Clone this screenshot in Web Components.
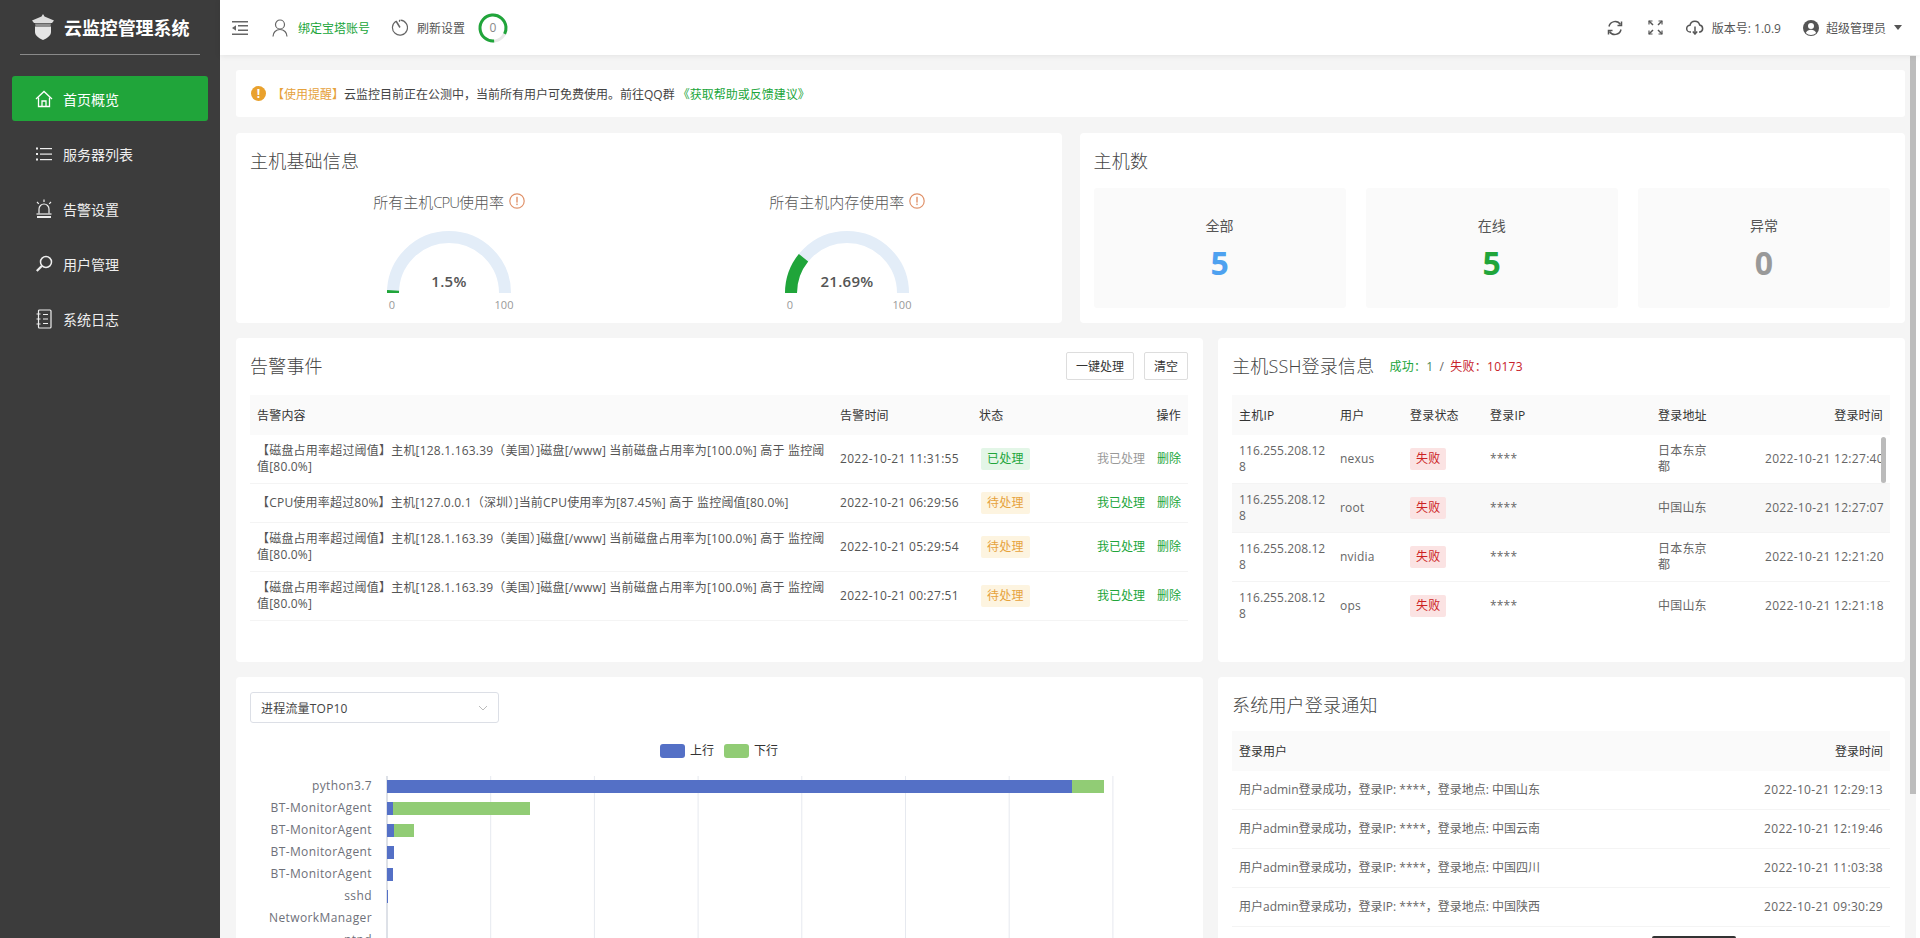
<!DOCTYPE html>
<html lang="zh-CN">
<head>
<meta charset="utf-8">
<title>云监控管理系统</title>
<style>
  html, body { margin: 0; height: 100%; overflow: hidden; }
  body { font-family: "Open Sans", "Noto Sans CJK SC", sans-serif; font-size: 12px; color: #666; }
</style>
</head>
<body>
<app-shell></app-shell>

<script>
const ICONS = {
  logo: `<svg width="24" height="26" viewBox="0 0 24 26"><path d="M12 0l1.500 2.500L23 6.500l-2 2.500H3L1 6.500l9.500-4z" fill="#ddd"/><path d="M4 9.500h16l-.5 2.500h-15z" fill="#8f8f8f"/><path d="M4 12.500h16v5.500c0 3.500-3.500 6-8 8-4.500-2-8-4.500-8-8z" fill="#e6e6e6"/></svg>`,
  home: `<svg width="18" height="18" viewBox="0 0 18 18" fill="none" stroke="currentColor" stroke-width="1.300"><path d="M1 9l8-7.500L17 9"/><path d="M3.500 7.500v9h11v-9"/><path d="M7 16.500v-5.500h4v5.500"/></svg>`,
  list: `<svg width="18" height="16" viewBox="0 0 18 16" fill="currentColor"><rect x="1" y="1.500" width="2" height="2"/><rect x="1" y="7" width="2" height="2"/><rect x="1" y="12.500" width="2" height="2"/><rect x="5" y="2" width="12" height="1.200"/><rect x="5" y="7.500" width="12" height="1.200"/><rect x="5" y="13" width="12" height="1.200"/></svg>`,
  alarm: `<svg width="18" height="20" viewBox="0 0 18 20" fill="none" stroke="currentColor" stroke-width="1.200"><path d="M4 14.500V10a5 5 0 0 1 10 0v4.500"/><path d="M9 0.500v2.500M2 3l1.800 1.800M16 3l-1.800 1.800"/><path d="M1.500 15h15"/><path d="M2 18h14" stroke-width="2"/></svg>`,
  search: `<svg width="18" height="18" viewBox="0 0 18 18" fill="none" stroke="currentColor"><circle cx="11" cy="7" r="5.500" stroke-width="1.500"/><path d="M6.800 11L1.800 16" stroke-width="2.200"/></svg>`,
  log: `<svg width="16" height="20" viewBox="0 0 16 20" fill="none" stroke="currentColor" stroke-width="1.200"><rect x="2.500" y="1" width="12.500" height="18" rx="1"/><path d="M0.500 5h4M0.500 10h4M0.500 15h4M7 5.500h5M7 10h5M7 14.500h5"/></svg>`,
  collapse: `<svg width="16" height="14" viewBox="0 0 16 14" fill="#666"><rect y="0" width="16" height="1.500"/><rect x="6" y="4" width="10" height="1.500"/><rect x="6" y="8.500" width="10" height="1.500"/><rect y="12.500" width="16" height="1.500"/><path d="M0 7l4-2.800v5.600z"/></svg>`,
  user: `<svg width="16" height="18" viewBox="0 0 16 18" fill="none" stroke="#666" stroke-width="1.200"><circle cx="8" cy="5.500" r="4.500"/><path d="M1 17.500c0-4 3-7 7-7s7 3 7 7"/></svg>`,
  timer: `<svg width="17" height="17" viewBox="0 0 17 17" fill="none" stroke="#666" stroke-width="1.200"><path d="M5 2.200A7.500 7.500 0 1 0 9.500 1.100"/><path d="M5 2l4 6.500" stroke-width="1.500"/><path d="M8.500 0.800v2"/></svg>`,
  refresh: `<svg width="16" height="16" viewBox="0 0 16 16" fill="none" stroke="#555" stroke-width="1.500"><path d="M2 6.500A6.300 6.300 0 0 1 13.500 4.500"/><path d="M14 9.500A6.300 6.300 0 0 1 2.500 11.500"/><path d="M14.500 1.500v4h-4M1.500 14.500v-4h4"/></svg>`,
  expand: `<svg width="15" height="15" viewBox="0 0 15 15" fill="none" stroke="#555" stroke-width="1.500"><path d="M1 1l4 4M14 1l-4 4M1 14l4-4M14 14l-4-4"/><path d="M1 4.500V1h3.500M10.500 1H14v3.500M1 10.500V14h3.500M10.500 14H14v-3.500" stroke-width="1.200"/></svg>`,
  cloud: `<svg width="18" height="15" viewBox="0 0 18 15" fill="none" stroke="#555" stroke-width="1.500"><path d="M5 12H4.200A3.400 3.400 0 0 1 4 5.200 5 5 0 0 1 13.700 5a3.600 3.600 0 0 1 .3 7h-1"/><path d="M9 6.500v7"/><path d="M6.800 11.500L9 14l2.200-2.500"/></svg>`,
  avatar: `<svg width="16" height="16" viewBox="0 0 16 16"><circle cx="8" cy="8" r="8" fill="#555"/><circle cx="8" cy="6" r="3" fill="#fff"/><path d="M2.800 13c1-2.500 3-3.300 5.200-3.300s4.200.8 5.200 3.300a7.500 7.500 0 0 1-10.400 0z" fill="#fff"/></svg>`,
  warn: `<svg width="16" height="16" viewBox="0 0 16 16"><circle cx="8" cy="8" r="7.200" fill="none" stroke="#e0926a" stroke-width="1.200"/><rect x="7.300" y="3.800" width="1.400" height="5.800" fill="#e0926a"/><rect x="7.300" y="10.600" width="1.400" height="1.500" fill="#e0926a"/></svg>`,
};

class AppSidebar extends HTMLElement {
  constructor() {
    super();
    this.attachShadow({ mode: 'open' });
  }

  connectedCallback() {
    const items = [
      ['home', '首页概览', true],
      ['list', '服务器列表'],
      ['alarm', '告警设置'],
      ['search', '用户管理'],
      ['log', '系统日志'],
    ];
    this.shadowRoot.innerHTML = `
      <style>
        :host { display: block; width: 220px; flex: none; background: #3c3c3c; color: #eee; }
        .brand { height: 55px; margin: 0 20px; box-sizing: border-box; border-bottom: 1px solid #8a8a8a; display: flex; align-items: center; padding-left: 11px; gap: 9px; color: #fff; font-size: 18px; font-weight: 700; letter-spacing: -.1px; }
        .brand svg { margin-top: -1px; flex: none; }
        nav { padding: 21px 12px 0; display: flex; flex-direction: column; gap: 10px; }
        a { height: 45px; display: flex; align-items: center; border-radius: 3px; font-size: 14px; padding-left: 23px; }
        a.on { background: #20a53a; color: #fff; }
        .ic { width: 18px; height: 22px; margin-right: 10px; display: flex; align-items: center; justify-content: center; }
      </style>
      <div class="brand">${ICONS.logo}<span>云监控管理系统</span></div>
      <nav>
        ${items.map(([icon, label, on]) => `<a class="${on ? 'on' : ''}"><span class="ic">${ICONS[icon]}</span>${label}</a>`).join('')}
      </nav>
    `;
  }
}

class AppHeader extends HTMLElement {
  constructor() {
    super();
    this.attachShadow({ mode: 'open' });
  }

  connectedCallback() {
    this.shadowRoot.innerHTML = `
      <style>
        :host { display: flex; align-items: center; height: 55px; flex: none; background: #fff; box-shadow: 0 1px 6px rgba(0,0,0,.08); padding: 0 18px 0 12px; font-size: 12px; color: #555; position: relative; z-index: 2; box-sizing: border-box; }
        .item { display: flex; align-items: center; gap: 9px; white-space: nowrap; }
        .green { color: #20a53a; }
        .ring { width: 30px; height: 30px; margin-left: 13px; position: relative; display: flex; align-items: center; justify-content: center; color: #888; }
        .ring svg { position: absolute; inset: 0; }
        .push { margin-left: auto; }
        .caret { width: 0; height: 0; border: 4px solid transparent; border-top: 5px solid #555; border-bottom: 0; }
      </style>
      <span class="item">${ICONS.collapse}</span>
      <span class="item green" style="margin-left:24px;gap:10px">${ICONS.user}绑定宝塔账号</span>
      <span class="item" style="margin-left:21px">${ICONS.timer}刷新设置</span>
      <span class="ring">
        <svg width="30" height="30" viewBox="0 0 30 30" fill="none">
          <circle cx="15" cy="15" r="13" stroke="#e8e8e8" stroke-width="3"/>
          <circle cx="15" cy="15" r="13" stroke="#20a53a" stroke-width="3" stroke-dasharray="68 14" transform="rotate(85 15 15)"/>
        </svg>
        0
      </span>
      <span class="item push">${ICONS.refresh}</span>
      <span class="item" style="margin-left:25px">${ICONS.expand}</span>
      <span class="item" style="margin-left:23px;gap:8px">${ICONS.cloud}版本号: 1.0.9</span>
      <span class="item" style="margin-left:22px;gap:7px">${ICONS.avatar}超级管理员<i class="caret" style="margin-left:1px"></i></span>
    `;
  }
}

class NoticeBar extends HTMLElement {
  constructor() {
    super();
    this.attachShadow({ mode: 'open' });
  }

  connectedCallback() {
    this.shadowRoot.innerHTML = `
      <style>
        :host { display: flex; align-items: center; height: 47px; background: #fff; border-radius: 3px; padding-left: 15px; color: #444; font-size: 12px; }
        .dot { width: 15px; height: 15px; border-radius: 50%; background: #e9a12d; color: #fff; margin-right: 6px; font-weight: 700; line-height: 15px; text-align: center; flex: none; }
        .tip { color: #e6a23c; }
        .link { color: #20a53a; margin-left: 3px; }
      </style>
      <span class="dot">!</span><span class="tip">【使用提醒】</span><span>云监控目前正在公测中，当前所有用户可免费使用。前往QQ群</span><span class="link">《获取帮助或反馈建议》</span>
    `;
  }
}

class UiCard extends HTMLElement {
  constructor() {
    super();
    this.attachShadow({ mode: 'open' });
  }

  connectedCallback() {
    this.shadowRoot.innerHTML = `
      <style>
        :host { display: block; background: #fff; border-radius: 4px; padding: 15px 15px 15px 14px; box-sizing: border-box; min-width: 0; overflow: hidden; position: relative; }
        .head { display: flex; align-items: center; height: 26px; }
        h3 { margin: 0; font-size: 18px; font-weight: 300; color: #444; line-height: 26px; letter-spacing: .2px; }
        .head ::slotted([slot=extra]) { margin-left: 15px; }
        .head ::slotted([slot=actions]) { margin-left: auto; }
        .head.none { display: none; }
      </style>
      <div class="head ${this.getAttribute('title') ? '' : 'none'}">
        <h3>${this.getAttribute('title') || ''}</h3>
        <slot name="extra"></slot>
        <slot name="actions"></slot>
      </div>
      <slot></slot>
    `;
    this.removeAttribute('title');
  }
}

class GaugeChart extends HTMLElement {
  constructor() {
    super();
    this.attachShadow({ mode: 'open' });
  }

  connectedCallback() {
    const value = parseFloat(this.getAttribute('value'));
    const r = 56, cx = 65, cy = 66;
    const a = Math.PI * (1 - value / 100);
    const ex = (cx + r * Math.cos(a)).toFixed(2), ey = (cy - r * Math.sin(a)).toFixed(2);
    this.shadowRoot.innerHTML = `
      <style>
        :host { display: flex; flex-direction: column; align-items: center; flex: 1; }
        .t { display: flex; align-items: center; gap: 5px; font-size: 15px; font-weight: 300; color: #555; height: 22px; margin-top: 16px; white-space: nowrap; }
        svg.g { margin-top: 15px; display: block; }
        text { font-family: "Open Sans", sans-serif; }
        ::slotted(span) { letter-spacing: -1px; }
      </style>
      <div class="t"><span><slot></slot></span>${ICONS.warn}</div>
      <svg class="g" width="130" height="84" viewBox="0 0 130 84">
        <path d="M${cx - r} ${cy}A${r} ${r} 0 0 1 ${cx + r} ${cy}" fill="none" stroke="#e3edf8" stroke-width="12"/>
        <path d="M${cx - r} ${cy}A${r} ${r} 0 0 1 ${ex} ${ey}" fill="none" stroke="#20a53a" stroke-width="12"/>
        <text x="${cx}" y="60" text-anchor="middle" font-size="15" font-weight="600" fill="#555" letter-spacing=".3">${value}%</text>
        <text x="8" y="82" text-anchor="middle" font-size="11" fill="#999">0</text>
        <text x="120" y="82" text-anchor="middle" font-size="11" fill="#999">100</text>
      </svg>
    `;
  }
}

class StatTile extends HTMLElement {
  constructor() {
    super();
    this.attachShadow({ mode: 'open' });
  }

  connectedCallback() {
    this.shadowRoot.innerHTML = `
      <style>
        :host { display: flex; flex-direction: column; align-items: center; flex: 1; height: 120px; background: #fafafa; border-radius: 3px; color: #555; font-size: 14px; box-sizing: border-box; padding-top: 27px; }
        b { font-size: 32px; line-height: 40px; margin-top: 8px; font-weight: 700; color: ${this.getAttribute('color')}; }
      </style>
      <span>${this.getAttribute('label')}</span>
      <b>${this.getAttribute('value')}</b>
    `;
  }
}

class StatusBadge extends HTMLElement {
  constructor() {
    super();
    this.attachShadow({ mode: 'open' });
  }

  connectedCallback() {
    const tones = {
      ok: ['#e3f6e7', '#20a53a'],
      wait: ['#fdf4e0', '#e6a23c'],
      fail: ['#fbe3e3', '#cc2222'],
    };
    const [bg, fg] = tones[this.getAttribute('tone')];
    this.shadowRoot.innerHTML = `
      <style>
        :host { display: inline-block; height: 22px; line-height: 22px; padding: 0 6px; border-radius: 2px; background: ${bg}; color: ${fg}; font-size: 12px; vertical-align: middle; }
      </style>
      <slot></slot>
    `;
  }
}

const TABLE_CSS = `
  table { width: 100%; border-collapse: separate; border-spacing: 0; table-layout: fixed; font-size: 12px; color: #666; letter-spacing: .2px; }
  th { height: 40px; box-sizing: border-box; background: #fafafa; color: #333; font-weight: 400; text-align: left; padding: 0 7px; }
  td { padding: 8px 7px; line-height: 16px; border-bottom: 1px solid #f4f4f4; word-break: break-all; }
  .r { text-align: right; }
  .time { letter-spacing: .3px; white-space: nowrap; }
`;

class AlarmTable extends HTMLElement {
  constructor() {
    super();
    this.attachShadow({ mode: 'open' });
  }

  connectedCallback() {
    const disk = '【磁盘占用率超过阈值】主机[128.1.163.39（美国）]磁盘[/www] 当前磁盘占用率为[100.0%] 高于 监控阈值[80.0%]';
    const rows = [
      [disk, '2022-10-21 11:31:55', 'ok', '已处理'],
      ['【CPU使用率超过80%】主机[127.0.0.1（深圳）]当前CPU使用率为[87.45%] 高于 监控阈值[80.0%]', '2022-10-21 06:29:56', 'wait', '待处理'],
      [disk, '2022-10-21 05:29:54', 'wait', '待处理'],
      [disk, '2022-10-21 00:27:51', 'wait', '待处理'],
    ];
    this.shadowRoot.innerHTML = `
      <style>
        :host { display: block; margin-top: 16px; }
        ${TABLE_CSS}
        td { color: #555; }
        .a { color: #20a53a; margin-left: 12px; letter-spacing: 0; }
        .done { color: #999; }
      </style>
      <table>
        <colgroup><col style="width:583px"><col style="width:139px"><col style="width:70px"><col></colgroup>
        <thead><tr><th>告警内容</th><th>告警时间</th><th>状态</th><th class="r">操作</th></tr></thead>
        <tbody>
          ${rows.map(([text, time, tone, state]) => `<tr>
            <td>${text}</td>
            <td class="time">${time}</td>
            <td><status-badge tone="${tone}" style="margin-left:2px">${state}</status-badge></td>
            <td class="r"><span class="a ${tone === 'ok' ? 'done' : ''}">我已处理</span><span class="a">删除</span></td>
          </tr>`).join('')}
        </tbody>
      </table>
    `;
  }
}

class SshTable extends HTMLElement {
  constructor() {
    super();
    this.attachShadow({ mode: 'open' });
  }

  connectedCallback() {
    const ip = '116.255.208.128';
    const rows = [
      ['nexus', '日本东京都', '2022-10-21 12:27:40'],
      ['root', '中国山东', '2022-10-21 12:27:07'],
      ['nvidia', '日本东京都', '2022-10-21 12:21:20'],
      ['ops', '中国山东', '2022-10-21 12:21:18'],
    ];
    this.shadowRoot.innerHTML = `
      <style>
        :host { display: block; margin-top: 16px; position: relative; }
        ${TABLE_CSS}
        tbody tr:nth-child(2) td { background: #f8f8f8; }
        tbody tr:last-child td { border-bottom: 0; }
        td.ip { padding-right: 4px; letter-spacing: .1px; }
        td.addr { padding-right: 50px; }
        .bar { position: absolute; right: 4px; top: 42px; width: 5px; height: 46px; background: #bbb; border-radius: 3px; }
      </style>
      <table>
        <colgroup><col style="width:101px"><col style="width:70px"><col style="width:80px"><col style="width:168px"><col style="width:107px"><col></colgroup>
        <thead><tr><th>主机IP</th><th>用户</th><th>登录状态</th><th>登录IP</th><th>登录地址</th><th class="r">登录时间</th></tr></thead>
        <tbody>
          ${rows.map(([user, addr, time]) => `<tr>
            <td class="ip">${ip}</td>
            <td>${user}</td>
            <td><status-badge tone="fail">失败</status-badge></td>
            <td>****</td>
            <td class="addr">${addr}</td>
            <td class="r time">${time}</td>
          </tr>`).join('')}
        </tbody>
      </table>
      <div class="bar"></div>
    `;
  }
}

class NotifyTable extends HTMLElement {
  constructor() {
    super();
    this.attachShadow({ mode: 'open' });
  }

  connectedCallback() {
    const rows = [
      ['中国山东', '2022-10-21 12:29:13'],
      ['中国云南', '2022-10-21 12:19:46'],
      ['中国四川', '2022-10-21 11:03:38'],
      ['中国陕西', '2022-10-21 09:30:29'],
    ];
    this.shadowRoot.innerHTML = `
      <style>
        :host { display: block; margin-top: 13px; }
        ${TABLE_CSS}
        td { padding: 11px 7px; }
        table { letter-spacing: 0; }
      </style>
      <table>
        <colgroup><col><col style="width:160px"></colgroup>
        <thead><tr><th>登录用户</th><th class="r">登录时间</th></tr></thead>
        <tbody>
          ${rows.map(([place, time]) => `<tr>
            <td>用户admin登录成功，登录IP: ****，登录地点: ${place}</td>
            <td class="r time">${time}</td>
          </tr>`).join('')}
        </tbody>
      </table>
    `;
  }
}

class TrafficChart extends HTMLElement {
  constructor() {
    super();
    this.attachShadow({ mode: 'open' });
  }

  connectedCallback() {
    // [name, up end x, down end x], measured from the axis line
    const x0 = 151, step = 103.7;
    const rows = [
      ['python3.7', 685, 717],
      ['BT-MonitorAgent', 6, 143],
      ['BT-MonitorAgent', 7, 27],
      ['BT-MonitorAgent', 7, 7],
      ['BT-MonitorAgent', 6, 6],
      ['sshd', 1, 1],
      ['NetworkManager', 0, 0],
      ['ntpd', 0, 0],
    ];
    const grid = Array.from({ length: 8 }, (_, i) => x0 + i * step);
    this.shadowRoot.innerHTML = `
      <style>
        :host { display: block; }
        .sel { width: 249px; height: 31px; border: 1px solid #dcdfe6; border-radius: 3px; box-sizing: border-box; display: flex; align-items: center; justify-content: space-between; padding: 0 10px; font-size: 12px; color: #444; letter-spacing: .2px; }
        .sel svg { flex: none; }
        svg.c { display: block; margin: 12px 0 0 -14px; }
        text { font-family: "Open Sans", "Noto Sans CJK SC", sans-serif; font-size: 12px; }
        .lb { letter-spacing: .4px; }
      </style>
      <div class="sel"><span>进程流量TOP10</span><svg width="10" height="6" viewBox="0 0 10 6" fill="none" stroke="#bbb"><path d="M1 1l4 4 4-4"/></svg></div>
      <svg class="c" width="967" height="350" viewBox="0 0 967 350">
        <rect x="424" y="9" width="25" height="14" rx="3" fill="#5470c6"/>
        <text x="454" y="20" fill="#333">上行</text>
        <rect x="488" y="9" width="25" height="14" rx="3" fill="#91cc75"/>
        <text x="518" y="20" fill="#333">下行</text>
        ${grid.map((x, i) => `<line x1="${x}" x2="${x}" y1="41" y2="260" stroke="${i ? '#e6e9ef' : '#bcc3d0'}"/>`).join('')}
        ${rows.map(([name, up, down], i) => {
          const y = 45 + i * 22;
          return `
            <text class="lb" x="136" y="${y + 9.5}" text-anchor="end" fill="#6e7079">${name}</text>
            ${down > up ? `<rect x="${x0 + up}" y="${y}" width="${down - up}" height="13" fill="#91cc75"/>` : ''}
            ${up ? `<rect x="${x0}" y="${y}" width="${up}" height="13" fill="#5470c6"/>` : ''}`;
        }).join('')}
      </svg>
    `;
  }
}

class AppShell extends HTMLElement {
  constructor() {
    super();
    this.attachShadow({ mode: 'open' });
  }

  connectedCallback() {
    this.shadowRoot.innerHTML = `
      <style>
        :host { display: flex; height: 100vh; background: #fff; font-family: "Open Sans", "Noto Sans CJK SC", sans-serif; }
        .col { flex: 1; min-width: 0; display: flex; flex-direction: column; position: relative; }
        main { flex: 1; min-height: 0; overflow: hidden; background: #f5f5f5; margin-right: 4px; padding: 15px 11px 15px 16px; display: flex; flex-direction: column; gap: 15px; box-sizing: border-box; }
        .row { display: grid; gap: 15px; flex: none; }
        .r1 { grid-template-columns: 1fr 1fr; gap: 18px; height: 190px; }
        .r2 { grid-template-columns: 967px 1fr; height: 324px; }
        .r3 { grid-template-columns: 967px 1fr; height: 419px; }
        notice-bar { margin-bottom: 1px; flex: none; }
        .flex { display: flex; }
        .tiles { gap: 20px; margin-top: 14px; }
        .extra { font-size: 12px; color: #20a53a; letter-spacing: .3px; }
        .extra i { font-style: normal; color: #666; margin: 0 6px; }
        .extra em { font-style: normal; color: #c7222a; }
        .btns { display: flex; gap: 10px; }
        button { font: inherit; font-size: 12px; color: #333; background: #fff; border: 1px solid #ddd; border-radius: 2px; height: 28px; padding: 0; }
        .thumb { position: absolute; right: 4px; top: 56px; width: 6px; height: 738px; background: #bdbdbd; }
        .toast { position: absolute; left: 1432px; bottom: 0; width: 84px; height: 2px; background: #333; border-radius: 3px 3px 0 0; }
      </style>
      <app-sidebar></app-sidebar>
      <div class="col">
        <app-header></app-header>
        <main>
          <notice-bar></notice-bar>
          <div class="row r1">
            <ui-card title="主机基础信息">
              <div class="flex">
                <gauge-chart value="1.5">所有主机<span>CPU</span>使用率</gauge-chart>
                <gauge-chart value="21.69">所有主机内存使用率</gauge-chart>
              </div>
            </ui-card>
            <ui-card title="主机数">
              <div class="flex tiles">
                <stat-tile label="全部" value="5" color="#4da1f0"></stat-tile>
                <stat-tile label="在线" value="5" color="#20a53a"></stat-tile>
                <stat-tile label="异常" value="0" color="#999"></stat-tile>
              </div>
            </ui-card>
          </div>
          <div class="row r2">
            <ui-card title="告警事件">
              <div class="btns" slot="actions">
                <button style="width:68px">一键处理</button>
                <button style="width:44px">清空</button>
              </div>
              <alarm-table></alarm-table>
            </ui-card>
            <ui-card title="主机SSH登录信息">
              <span class="extra" slot="extra">成功：<span style="color:#4a8a5c">1</span><i>/</i><em>失败：10173</em></span>
              <ssh-table></ssh-table>
            </ui-card>
          </div>
          <div class="row r3">
            <ui-card>
              <traffic-chart></traffic-chart>
            </ui-card>
            <ui-card title="系统用户登录通知">
              <notify-table></notify-table>
            </ui-card>
          </div>
        </main>
        <div class="thumb"></div>
        <div class="toast"></div>
      </div>
    `;
  }
}

customElements.define('app-sidebar', AppSidebar);
customElements.define('app-header', AppHeader);
customElements.define('notice-bar', NoticeBar);
customElements.define('ui-card', UiCard);
customElements.define('gauge-chart', GaugeChart);
customElements.define('stat-tile', StatTile);
customElements.define('status-badge', StatusBadge);
customElements.define('alarm-table', AlarmTable);
customElements.define('ssh-table', SshTable);
customElements.define('notify-table', NotifyTable);
customElements.define('traffic-chart', TrafficChart);
customElements.define('app-shell', AppShell);
</script>
</body>
</html>
